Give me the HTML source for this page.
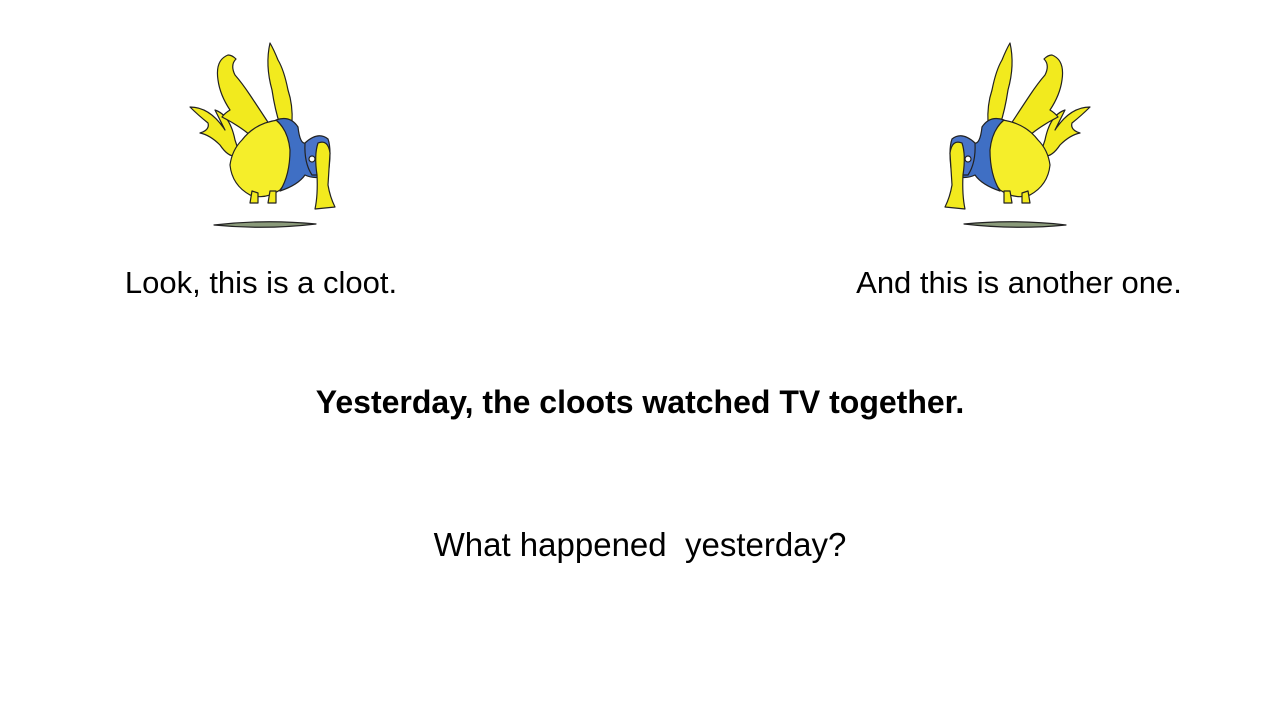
<!DOCTYPE html>
<html><head><meta charset="utf-8"><style>
html,body{margin:0;padding:0;background:#fff;}
body{width:1280px;height:720px;position:relative;overflow:hidden;font-family:"Liberation Sans",sans-serif;color:#000;}
.t{position:absolute;white-space:nowrap;transform:translateX(-50%);font-size:31px;line-height:1;}
svg{position:absolute;left:0;top:0;}
</style></head><body>
<svg width="1280" height="720" viewBox="0 0 1280 720">
<defs>
<g id="cloot" stroke="#222" stroke-width="1.2" stroke-linejoin="round">
  <path d="M34 190 Q85 184 136 189 Q85 195 34 190Z" fill="#8a9a7a"/>
  <path d="M10 72 Q30 72 45 95 L35 75 Q50 80 55 105 L60 120 Q50 125 40 110 Q30 100 20 98 Q30 95 28 88 Q18 80 10 72Z" fill="#f2ea1e"/>
  <path d="M48 20 Q35 25 38 45 Q40 60 50 75 Q45 78 42 82 Q58 90 70 100 L95 98 Q80 75 70 60 Q62 48 55 40 Q50 30 56 24 Q52 20 48 20Z" fill="#f2ea1e"/>
  <path d="M90 8 Q85 30 92 55 Q95 75 100 90 L112 88 Q113 70 108 55 Q104 35 98 25 Q94 15 90 8Z" fill="#f2ea1e"/>
  <path d="M62 105 Q75 88 98 85 Q110 88 112 110 Q113 140 100 155 Q85 165 70 160 Q52 150 50 130 Q52 115 62 105Z" fill="#f5ee2a"/>
  <path d="M96 85 Q110 80 118 92 Q120 110 126 108 Q140 98 148 108 L148 140 Q135 145 125 140 Q118 150 100 156 Q110 140 110 115 Q108 95 96 85Z" fill="#3f6fc4"/>
  <path d="M125 108 Q138 96 148 104 Q152 115 148 140 L132 140 Q124 128 125 108Z" fill="#4a74c8"/>
  <circle cx="132" cy="124" r="3" fill="#fff"/>
  <path d="M138 108 Q148 104 150 118 L148 150 Q150 162 155 172 L135 174 Q138 160 137 140 Q134 120 138 108Z" fill="#f2ea1e"/>
  <path d="M72 156 L70 168 L78 168 L78 158Z" fill="#f2ea1e"/>
  <path d="M90 156 L88 168 L96 168 L96 156Z" fill="#f2ea1e"/>
</g>
</defs>
<use href="#cloot" transform="translate(180,35)"/>
<use href="#cloot" transform="translate(1100,35) scale(-1,1)"/>
</svg>
<div class="t" style="left:261px;top:267px;">Look, this is a cloot.</div>
<div class="t" style="left:1019px;top:267px;">And this is another one.</div>
<div class="t" style="left:640px;top:386px;font-weight:bold;font-size:32px;">Yesterday, the cloots watched TV together.</div>
<div class="t" style="left:640px;top:528px;font-size:33px;">What happened &nbsp;yesterday?</div>
</body></html>
